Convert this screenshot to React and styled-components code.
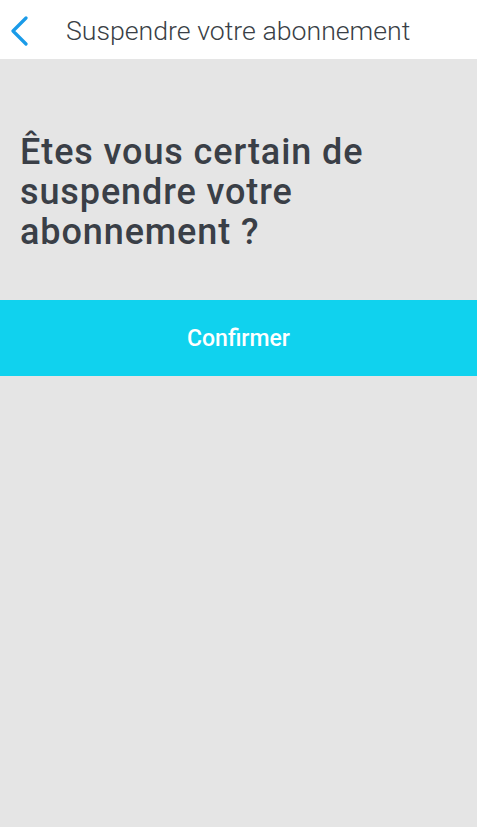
import React from "react";
import styled, { createGlobalStyle } from "styled-components";

const GlobalStyle = createGlobalStyle`
    html, body {
        margin: 0;
        padding: 0;
        background: #e5e5e5;
    }
    body {
        font-family: Roboto, "Liberation Sans", sans-serif;
    }
`

const Screen = styled.div`
    min-height: 827px;
    display: flex;
    flex-direction: column;
    background: #e5e5e5;
`

const TopBar = styled.header`
    height: 59px;
    background: #ffffff;
    display: flex;
    align-items: center;
    padding: 2px 0 0 10px;
    box-sizing: border-box;
`

const BackButton = styled.button`
    border: none;
    background: none;
    padding: 0;
    width: 20px;
    height: 30px;
    display: flex;
    align-items: center;
    cursor: pointer;
`

const Title = styled.h1`
    margin: 0 0 0 36px;
    font-size: 26.7px;
    font-weight: 300;
    color: #3a3f46;
`

const Question = styled.h2`
    margin: 0;
    padding: 73px 20px 48px 20px;
    font-size: 36px;
    line-height: 40px;
    letter-spacing: 0.9px;
    font-weight: 500;
    color: #3a3f47;
`

const ConfirmButton = styled.button`
    border: none;
    width: 100%;
    height: 76px;
    background: #10d2ee;
    color: #ffffff;
    font-family: Roboto, "Liberation Sans", sans-serif;
    font-size: 23px;
    font-weight: 500;
    cursor: pointer;
`

const App = () => {
    return (
        <>
            <GlobalStyle />
            <Screen>
                <TopBar>
                    <BackButton aria-label="Retour">
                        <svg width="18" height="30" viewBox="0 0 18 30">
                            <path d="M16 2 L3 15 L16 28" fill="none" stroke="#1a9be8" strokeWidth="3.2" strokeLinecap="round" strokeLinejoin="round" />
                        </svg>
                    </BackButton>
                    <Title>Suspendre votre abonnement</Title>
                </TopBar>
                <Question>Êtes vous certain de suspendre votre abonnement ?</Question>
                <ConfirmButton>Confirmer</ConfirmButton>
            </Screen>
        </>
    )
}

export default App;
